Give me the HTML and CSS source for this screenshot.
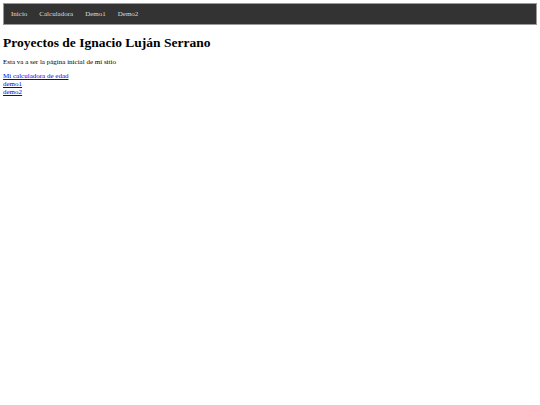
FILE: index.html
```html
<!DOCTYPE html>
<html lang="es">
<head>
<meta charset="utf-8">
<title>Proyectos</title>
<link rel="stylesheet" href="styles.css">
</head>
<body>
<nav class="topnav">
  <a class="navlink" href="#">Inicio</a>
  <a class="navlink" href="#">Calculadora</a>
  <a class="navlink" href="#">Demo1</a>
  <a class="navlink" href="#">Demo2</a>
</nav>
<h1 class="title">Proyectos de Ignacio Luján Serrano</h1>
<p class="intro">Esta va a ser la página inicial de mi sitio</p>
<div class="links">
  <a class="link" href="#">Mi calculadora de edad</a>
  <a class="link" href="#">demo1</a>
  <a class="link" href="#">demo2</a>
</div>
</body>
</html>
```
FILE: styles.css
```css
html, body {
  background: #fff;
}
body {
  margin: 3px;
  font-family: "Liberation Serif", "Times New Roman", serif;
  font-size: 7px;
  color: #000;
}
.topnav {
  display: flex;
  background: #333;
  border: 1px solid #999;
  height: 20px;
  align-items: center;
  padding-left: 1px;
}
.navlink {
  color: #ddd;
  text-decoration: none;
  padding: 0 6px;
}
.title {
  font-size: 13.5px;
  margin: 10px 0 7px 0;
}
.intro {
  margin: 0 0 6px 0;
}
.links {
  display: flex;
  flex-direction: column;
  align-items: flex-start;
  line-height: 8px;
}
.link {
  color: #00e;
  text-decoration: underline;
}
```
